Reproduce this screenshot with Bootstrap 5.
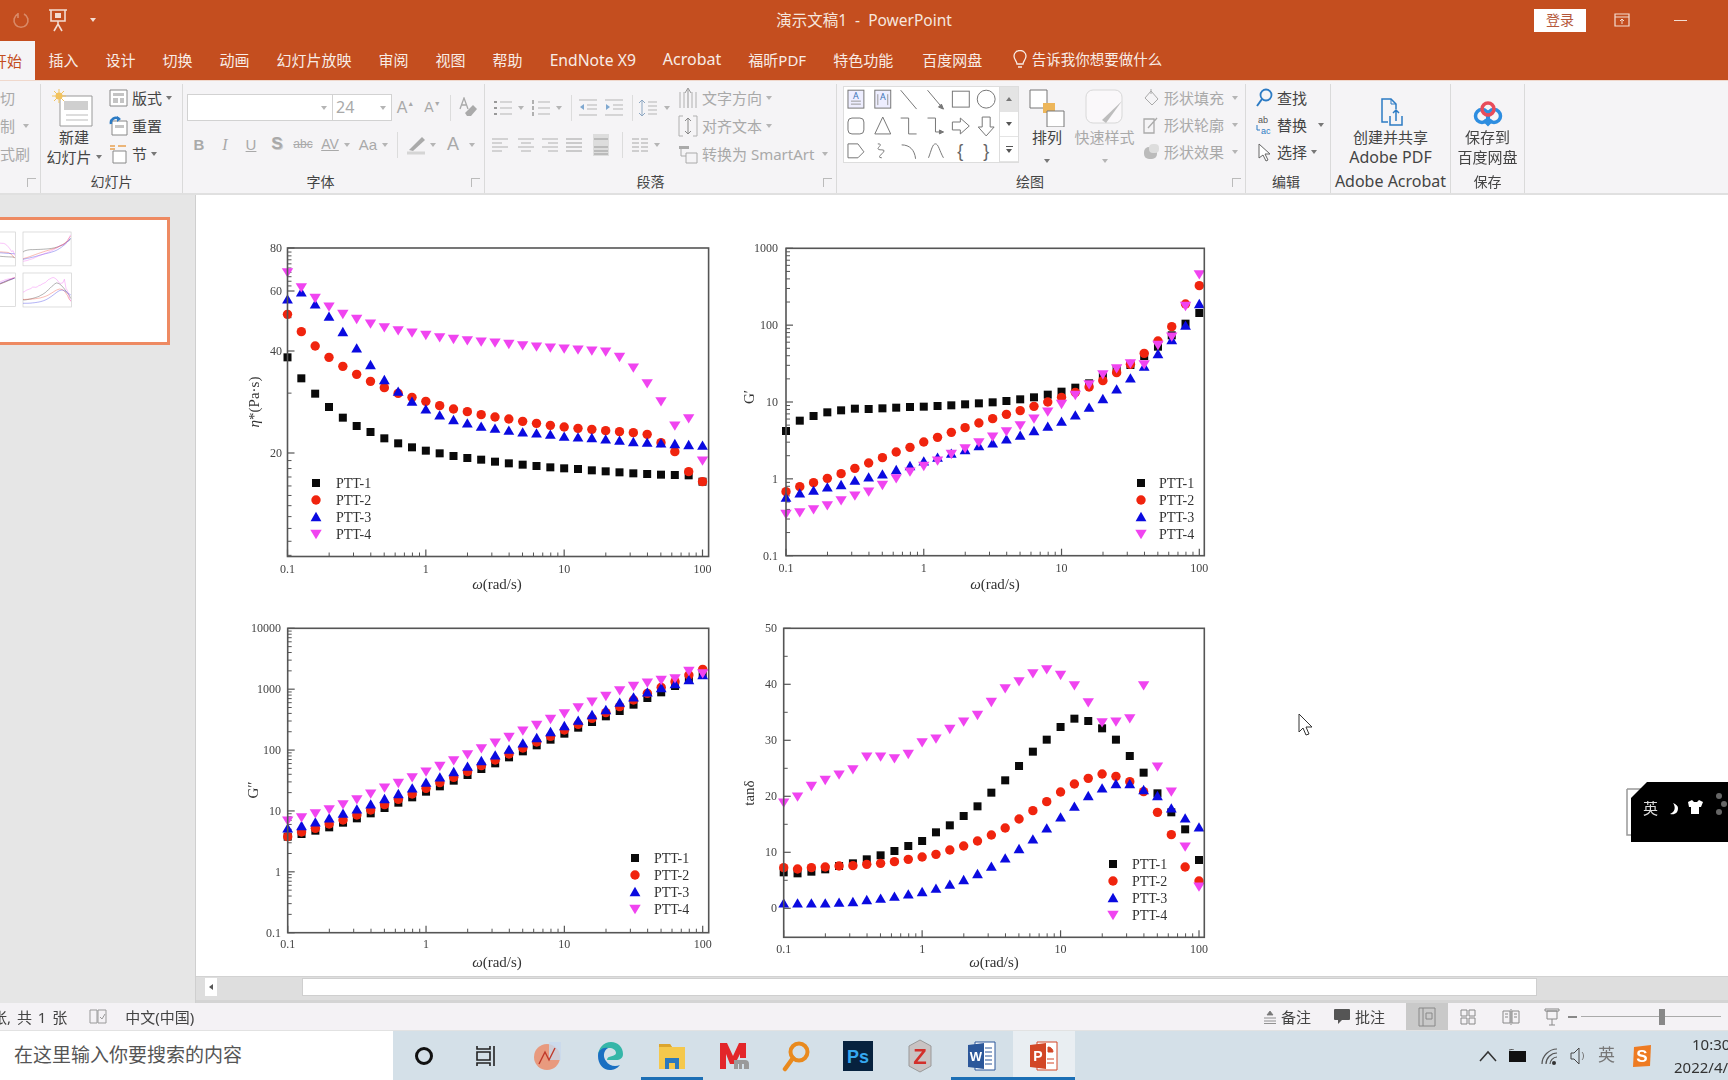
<!DOCTYPE html>
<html lang="zh-CN">
<head>
<meta charset="UTF-8" />
<title>演示文稿1 - PowerPoint</title>
<link href="https://cdn.jsdelivr.net/npm/bootstrap@5.3.0/dist/css/bootstrap.min.css" rel="stylesheet" />
<style>
  html, body { margin: 0; width: 1728px; height: 1080px; overflow: hidden; background: #fff; }
  body { font-family: "Noto Sans", "Noto Sans CJK SC", sans-serif; color: #444; font-size: 15px; line-height: 1.2; }
  .pp-app { width: 1728px; height: 1080px; position: relative; overflow: hidden; filter: blur(.5px); }
  .pp-title { height: 40px; background: #C44E1F; color: #F6E6DE; display: grid; grid-template-columns: 1fr auto 1fr; align-items: center; font-size: 15.5px; }
  .pp-tabs { height: 40px; background: #C44E1F; color: #F8ECE6; white-space: nowrap; }
  .pp-tab { padding: 0 13.5px; }
  .pp-tab-on { width: 35px; height: 39px; margin-top: 1px; background: #F5F4F6; color: #C44E1F; overflow: hidden; justify-content: flex-end; padding-right: 13px; flex-shrink: 0; }
  .pp-login { width: 52px; height: 23px; background: #fff; color: #B5573A; font-size: 14px; }
  .pp-ribbon { height: 115px; background: #F5F4F6; border-top: 1px solid #F0D8CC; border-bottom: 2px solid #E0E0E0; }
  .pp-grp { height: 109px; margin-top: 3px; border-right: 1px solid #DADADA; flex-shrink: 0; }
  .pp-grp-body { height: 88px; }
  .pp-grp-label { display: grid; grid-template-columns: 1fr auto 1fr; height: 20px; align-items: center; font-size: 14px; color: #444; padding-right: 4px; }
  .pp-launch { justify-self: end; width: 9px; height: 9px; border-left: 1px solid #bbb; border-top: 1px solid #bbb; }
  .pp-row { height: 28px; display: flex; align-items: center; white-space: nowrap; }
  .pp-off { color: #A9A9A9; }
  .pp-cell { display: inline-flex; align-items: center; justify-content: center; height: 27px; flex-shrink: 0; }
  .pp-tri { display: inline-block; width: 0; height: 0; border-left: 3px solid transparent; border-right: 3px solid transparent; border-top: 4px solid #777; flex-shrink: 0; }
  .pp-off .pp-tri, .pp-tri.pp-off { border-top-color: #B5B5B5; }
  .pp-sep { width: 1px; height: 26px; background: #DCDCDC; flex-shrink: 0; }
  .pp-box { height: 27px; background: #fff; border: 1px solid #D2D2D2; display: flex; align-items: center; flex-shrink: 0; }
  .pp-serif { font-family: "Liberation Sans", sans-serif; }
  .pp-bigcol { display: flex; flex-direction: column; align-items: center; flex-shrink: 0; }
  .pp-bigicon { height: 43px; display: flex; align-items: flex-end; justify-content: center; }
  .pp-line { height: 20px; line-height: 20px; white-space: nowrap; }
  .pp-gallery { width: 176px; height: 77px; margin-top: 2px; background: #fff; border: 1px solid #DDD; display: flex; flex-shrink: 0; }
  .pp-gal-side { width: 19px; border-left: 1px solid #DDD; display: flex; flex-direction: column; }
  .pp-gal-side > div { flex: 1; display: flex; align-items: center; justify-content: center; border-bottom: 1px solid #E4E4E4; }
  .pp-main { height: 808px; }
  .pp-left { width: 196px; background: #E6E6E6; border-right: 1px solid #CFCFCF; padding-top: 22px; flex-shrink: 0; }
  .pp-thumb { width: 173px; height: 128px; margin-left: -3px; border: 3px solid #EE8A62; background: #fff; }
  .pp-thumb svg, .pp-slide svg { display: block; }
  .pp-slide { height: 781px; background: #fff; }
  .pp-scroll { height: 27px; background: #DEDEDE; border-top: 1px solid #D2D2D2; padding: 1px 0 0 9px; border-bottom: 3px solid #D4D4D4; }
  .pp-scroll-btn { width: 12px; height: 18px; background: #fff; display: flex; align-items: center; justify-content: center; }
  .pp-scroll-thumb { width: 1235px; height: 18px; margin-left: 85px; background: #fff; border: 1px solid #CFCFCF; }
  .pp-status { height: 28px; background: #F4F2F5; font-size: 15px; white-space: nowrap; border-bottom: 1px solid #E2E2E2; overflow: hidden; }
  .pp-view-on { width: 42px; height: 28px; background: #C9C9C9; display: flex; align-items: center; justify-content: center; margin-left: 21px; }
  .pp-task { height: 49px; background: #D4E0E8; }
  .pp-search { width: 393px; height: 49px; background: #fff; color: #555; font-size: 19px; padding-left: 14px; flex-shrink: 0; }
  .pp-tcell { width: 62px; height: 49px; display: flex; align-items: center; justify-content: center; flex-shrink: 0; }
  .pp-tcell-open { box-shadow: inset 0 -3px 0 #1C6FB5; }
  .pp-tcell-act { background: #E9EEF2; box-shadow: inset 0 -3px 0 #1C6FB5; }
  .pp-clock { width: 54px; margin-left: 21px; font-size: 15px; color: #333; line-height: 23px; white-space: nowrap; overflow: hidden; }
  .pp-clock-time { padding-left: 18px; }
  .pp-float { position: absolute; left: 1626px; top: 782px; width: 102px; height: 60px; }
  .pp-float-txt { position: absolute; left: 17px; top: 17px; color: #ddd; font-size: 15px; }
  .pp-cursor { position: absolute; left: 1298px; top: 713px; }
</style>
</head>
<body>
<div class="pp-app">

  <!-- title bar -->
  <div class="pp-title">
    <div class="d-flex align-items-center">
      <svg width="20" height="20" style="margin-left:11px" viewBox="0 0 20 20"><path d="M7 4a7 7 0 1 0 6 0M7 3v5" fill="none" stroke="#D98A68" stroke-width="1.6"/></svg>
      <svg width="22" height="26" style="margin-left:16px" viewBox="0 0 22 26"><path d="M2 3h18M4 3v11h14V3M11 14v3M7 24l4-7 4 7" fill="none" stroke="#F3DDD2" stroke-width="1.6"/><path d="M8 6h6v5H8z" fill="#F3DDD2"/></svg>
      <span class="pp-tri" style="margin-left:21px;border-top-color:#F3DDD2"></span>
    </div>
    <div>演示文稿1&nbsp; -&nbsp; PowerPoint</div>
    <div class="d-flex align-items-center justify-content-end">
      <div class="pp-login d-flex align-items-center justify-content-center">登录</div>
      <svg width="16" height="14" style="margin-left:28px" viewBox="0 0 16 14"><path d="M1 1h14v12H1zM1 4h14" fill="none" stroke="#F3DDD2" stroke-width="1.2"/><path d="M8 11V6M6 8l2-2 2 2" fill="none" stroke="#F3DDD2"/></svg>
      <div style="width:13px;height:1px;background:#F3DDD2;margin:0 41px 0 44px"></div>
    </div>
  </div>

  <!-- tabs -->
  <div class="pp-tabs d-flex align-items-center">
    <div class="pp-tab-on d-flex align-items-center"><span>开始</span></div>
    <span class="pp-tab">插入</span>
    <span class="pp-tab">设计</span>
    <span class="pp-tab">切换</span>
    <span class="pp-tab">动画</span>
    <span class="pp-tab">幻灯片放映</span>
    <span class="pp-tab">审阅</span>
    <span class="pp-tab">视图</span>
    <span class="pp-tab">帮助</span>
    <span class="pp-tab" style="font-size:15.700px">EndNote X9</span>
    <span class="pp-tab" style="font-size:16px">Acrobat</span>
    <span class="pp-tab">福昕PDF</span>
    <span class="pp-tab">特色功能</span>
    <span class="pp-tab" style="margin-left:2px">百度网盘</span>
    <svg width="16" height="20" class="ms-3" viewBox="0 0 16 20"><path d="M5 14c0-3-3-4-3-8a6 5.500 0 0 1 12 0c0 4-3 5-3 8zM6 17h4" fill="none" stroke="#F8ECE6" stroke-width="1.3"/></svg>
    <span class="ms-1" style="font-size:14.500px">告诉我你想要做什么</span>
  </div>

  <!-- ribbon -->
  <div class="pp-ribbon d-flex">

    <div class="pp-grp" style="width:41px">
      <div class="pp-grp-body pp-off" style="overflow:hidden">
        <div class="pp-row">切</div>
        <div class="pp-row">制<span class="pp-tri ms-2"></span></div>
        <div class="pp-row">式刷</div>
      </div>
      <div class="pp-grp-label"><span></span><span></span><span class="pp-launch"></span></div>
    </div>

    <div class="pp-grp d-flex flex-column" style="width:142px">
      <div class="pp-grp-body d-flex">
        <div class="pp-bigcol" style="width:66px">
          <div class="pp-bigicon">
            <svg width="44" height="38" viewBox="0 0 44 38"><path d="M8 7h32v30H8z" fill="#fff" stroke="#999"/><path d="M12 12h24v9H12z" fill="#CFCFCF"/><path d="M14 26h22M14 31h22" stroke="#BBB"/><circle cx="7" cy="7" r="3.500" fill="#F2C35E"/><path d="M7 0v14M0 7h14M2 2l10 10M12 2L2 12" stroke="#F2C35E"/></svg>
          </div>
          <div class="pp-line">新建</div>
          <div class="pp-line">幻灯片<span class="pp-tri ms-1 mb-1"></span></div>
        </div>
        <div style="width:74px;padding-left:2px">
          <div class="pp-row"><svg width="19" height="18" viewBox="0 0 19 18" class="me-1"><path d="M1 1h17v16H1z" fill="#fff" stroke="#888"/><path d="M4 4h11v3H4zM4 9h5v5H4zM11 9h4v5h-4z" fill="#C4C4C4"/></svg>版式<span class="pp-tri ms-1"></span></div>
          <div class="pp-row"><svg width="19" height="20" viewBox="0 0 19 20" class="me-1"><path d="M3 5h15v14H3z" fill="#fff" stroke="#888"/><path d="M6 9h9v3H6z" fill="#C4C4C4"/><path d="M2 8a5 5 0 0 1 8-5" fill="none" stroke="#2C7BC4" stroke-width="2.500"/><path d="M8 0l4 3-4 3z" fill="#2C7BC4"/></svg>重置</div>
          <div class="pp-row"><svg width="19" height="20" viewBox="0 0 19 20" class="me-1"><path d="M4 7h13v12H4z" fill="#fff" stroke="#888"/><path d="M1 2h5M9 2h8M1 5h5" stroke="#E8A050" stroke-width="1.600"/></svg>节<span class="pp-tri ms-1"></span></div>
        </div>
      </div>
      <div class="pp-grp-label"><span></span><span style="margin-left:4px">幻灯片</span><span></span></div>
    </div>

    <div class="pp-grp d-flex flex-column pp-off" style="width:302px">
      <div class="pp-grp-body">
        <div class="d-flex align-items-center" style="margin-top:10px;padding-left:4px;height:27px">
          <div class="pp-box justify-content-end" style="width:146px;padding-right:5px"><span class="pp-tri"></span></div>
          <div class="pp-box justify-content-between" style="width:59px;padding:0 5px 0 3px;border-left:0"><span style="font-size:16px">24</span><span class="pp-tri"></span></div>
          <span class="pp-cell pp-serif" style="width:27px;font-size:16px">A<sup style="font-size:7px">▲</sup></span>
          <span class="pp-cell pp-serif" style="width:27px;font-size:14px">A<sup style="font-size:7px">▼</sup></span>
          <span class="pp-sep ms-1"></span>
          <span class="pp-cell" style="width:34px"><svg width="20" height="22" viewBox="0 0 20 22"><path d="M2 12L6 1l4 11M4 8h4" fill="none" stroke="#A9A9A9" stroke-width="1.300"/><path d="M7 16l8-8 4 4-6 7H9z" fill="#AAA"/></svg></span>
        </div>
        <div class="d-flex align-items-center" style="margin-top:10px;height:27px;margin-left:3px">
          <span class="pp-cell pp-serif fw-bold" style="width:26px">B</span>
          <span class="pp-cell pp-serif fst-italic" style="width:26px;font-family:'Liberation Serif',serif;font-size:16px">I</span>
          <span class="pp-cell pp-serif text-decoration-underline" style="width:26px">U</span>
          <span class="pp-cell pp-serif fw-bold" style="width:26px;font-size:17px;text-shadow:1px 1px 0 #ccc">S</span>
          <span class="pp-cell pp-serif text-decoration-line-through" style="width:26px;font-size:12px">abc</span>
          <span class="pp-cell pp-serif" style="width:26px;font-size:14px;margin-left:1px;text-decoration:underline">AV</span>
          <span class="pp-cell" style="width:8px"><span class="pp-tri"></span></span>
          <span class="pp-cell pp-serif" style="width:26px;margin-left:4px">Aa</span>
          <span class="pp-cell" style="width:8px"><span class="pp-tri"></span></span>
          <span class="pp-sep" style="margin-left:8px"></span>
          <span class="pp-cell" style="width:24px;margin-left:6px"><svg width="22" height="22" viewBox="0 0 22 22"><path d="M4 16L17 3l3 3L8 17z" fill="#AAA"/><path d="M2 19h18" stroke="#D5D5D5" stroke-width="3"/></svg></span>
          <span class="pp-cell" style="width:8px;margin-left:1px"><span class="pp-tri"></span></span>
          <span class="pp-cell pp-serif" style="width:24px;margin-left:4px;font-size:18px">A</span>
          <span class="pp-cell" style="width:8px;margin-left:3px"><span class="pp-tri"></span></span>
        </div>
      </div>
      <div class="pp-grp-label" style="color:#444"><span></span><span style="margin-right:22px">字体</span><span class="pp-launch"></span></div>
    </div>

    <div class="pp-grp d-flex flex-column pp-off" style="width:352px">
      <div class="pp-grp-body d-flex">
        <div style="width:193px">
          <div class="d-flex align-items-center" style="margin-top:10px;height:27px;padding-left:6px">
            <span class="pp-cell" style="width:24px"><svg width="20" height="18" viewBox="0 0 20 18"><path d="M1 3h3M1 9h3M1 15h3" stroke="#999" stroke-width="2"/><path d="M7 3h12M7 9h12M7 15h12" stroke="#B5B5B5"/></svg></span>
            <span class="pp-cell" style="width:8px;margin-left:2px"><span class="pp-tri"></span></span>
            <span class="pp-cell" style="width:24px;margin-left:4px"><svg width="20" height="18" viewBox="0 0 20 18"><path d="M2 1v4M2 7v4M2 13v4" stroke="#999" stroke-width="1.500"/><path d="M7 3h12M7 9h12M7 15h12" stroke="#B5B5B5"/></svg></span>
            <span class="pp-cell" style="width:8px;margin-left:2px"><span class="pp-tri"></span></span>
            <span class="pp-sep" style="margin-left:8px"></span>
            <span class="pp-cell" style="width:24px;margin-left:4px"><svg width="20" height="18" viewBox="0 0 20 18"><path d="M1 1h18M9 6h10M9 10h10M1 16h18" stroke="#B5B5B5"/><path d="M6 5L2 8l4 3z" fill="#7FA8D0"/></svg></span>
            <span class="pp-cell" style="width:24px;margin-left:2px"><svg width="20" height="18" viewBox="0 0 20 18"><path d="M1 1h18M9 6h10M9 10h10M1 16h18" stroke="#B5B5B5"/><path d="M2 5l4 3-4 3z" fill="#7FA8D0"/></svg></span>
            <span class="pp-sep" style="margin-left:6px"></span>
            <span class="pp-cell" style="width:24px;margin-left:3px"><svg width="20" height="20" viewBox="0 0 20 20"><path d="M4 2v16M1 5l3-3 3 3M1 15l3 3 3-3" fill="none" stroke="#8DA7C2"/><path d="M10 4h9M10 8h9M10 12h9M10 16h9" stroke="#B5B5B5"/></svg></span>
            <span class="pp-cell" style="width:8px;margin-left:3px"><span class="pp-tri"></span></span>
          </div>
          <div class="d-flex align-items-center" style="margin-top:10px;height:27px;padding-left:3px">
            <span class="pp-cell" style="width:24px"><svg width="18" height="14" viewBox="0 0 18 14"><path d="M1 1h16M1 5h10M1 9h16M1 13h10" stroke="#B0B0B0"/></svg></span>
            <span class="pp-cell" style="width:24px;margin-left:2px"><svg width="18" height="14" viewBox="0 0 18 14"><path d="M1 1h16M4 5h10M1 9h16M4 13h10" stroke="#B0B0B0"/></svg></span>
            <span class="pp-cell" style="width:24px"><svg width="18" height="14" viewBox="0 0 18 14"><path d="M1 1h16M7 5h10M1 9h16M7 13h10" stroke="#B0B0B0"/></svg></span>
            <span class="pp-cell" style="width:24px"><svg width="18" height="14" viewBox="0 0 18 14"><path d="M1 1h16M1 5h16M1 9h16M1 13h16" stroke="#A0A0A0"/></svg></span>
            <span class="pp-cell" style="width:24px;margin-left:3px"><svg width="18" height="24" viewBox="0 0 18 24"><path d="M1 1h16v22H1z" fill="#DDD"/><path d="M2 6h14M2 14h14M2 18h14M2 21h14" stroke="#999"/></svg></span>
            <span class="pp-sep" style="margin-left:9px"></span>
            <span class="pp-cell" style="width:24px;margin-left:5px"><svg width="18" height="14" viewBox="0 0 18 14"><path d="M1 1h7M10 1h7M1 5h7M10 5h7M1 9h7M10 9h7M1 13h7M10 13h7" stroke="#A8A8A8"/></svg></span>
            <span class="pp-cell" style="width:8px;margin-left:1px"><span class="pp-tri"></span></span>
          </div>
        </div>
        <div>
          <div class="pp-row" style="height:28px"><svg width="20" height="24" viewBox="0 0 20 24" class="me-1"><path d="M2 6v16M6 6v16M14 6v16M18 6v16" stroke="#B0B0B0"/><path d="M10 22V3M7 7l3-5 3 5" fill="none" stroke="#999"/></svg>文字方向<span class="pp-tri ms-1"></span></div>
          <div class="pp-row" style="height:28px"><svg width="20" height="22" viewBox="0 0 20 22" class="me-1"><path d="M5 1H1v20h4M15 1h4v20h-4" fill="none" stroke="#B0B0B0"/><path d="M10 3v16M7 6l3-3 3 3M7 16l3 3 3-3" fill="none" stroke="#888"/></svg>对齐文本<span class="pp-tri ms-1"></span></div>
          <div class="pp-row" style="height:28px"><svg width="20" height="20" viewBox="0 0 20 20" class="me-1"><path d="M1 2h10v3H1z" fill="#AAA"/><path d="M8 9h11v10H8z" fill="none" stroke="#AAA"/><path d="M3 5v7h5" fill="none" stroke="#AAA"/></svg>转换为 SmartArt<span class="pp-tri ms-2"></span></div>
        </div>
      </div>
      <div class="pp-grp-label" style="color:#444"><span></span><span style="margin-right:16px">段落</span><span class="pp-launch"></span></div>
    </div>

    <div class="pp-grp d-flex flex-column" style="width:409px">
      <div class="pp-grp-body d-flex" style="padding-left:6px">
        <div class="pp-gallery">
          <svg width="156" height="75" viewBox="844 87 156 75" fill="none" stroke="#777">
            <rect x="848" y="90" width="16" height="18" fill="#EEF"/><path d="M851 101h10M851 104h10" stroke="#999"/><text x="856" y="99" font-size="9" fill="#3A74B8" stroke="none" text-anchor="middle">A</text>
            <rect x="875" y="90" width="16" height="18" fill="#EEF"/><path d="M878 94v11M888 94v11" stroke="#999"/><text x="883" y="100" font-size="9" fill="#3A74B8" stroke="none" text-anchor="middle">A</text>
            <path d="M901 90l16 19M928 90l16 19"/><path d="M944 109l-5-2 3-3z" fill="#777"/>
            <rect x="953" y="91" width="17" height="16"/><ellipse cx="987" cy="99" rx="9" ry="9"/>
            <rect x="848" y="118" width="16" height="16" rx="4"/><path d="M883 117l8 17h-16z"/>
            <path d="M901 118h8v16h8M928 118h8v14h8"/><path d="M944 132l-4-2v4z" fill="#777"/>
            <path d="M953 122h8v-4l9 8-9 8v-4h-8zM983 117h8v10h4l-8 9-8-9h4z"/>
            <path d="M848 158v-14h10l6 8-6 6zM878 144c8 0-6 6 4 6 8 0-8 8 0 8M902 145c8 0 13 5 14 14M929 158c3-8 4-14 7-14s4 7 8 14"/>
            <text x="961" y="157" font-size="18" fill="#666" stroke="none" text-anchor="middle" font-family="Liberation Sans">{</text>
            <text x="987" y="157" font-size="18" fill="#666" stroke="none" text-anchor="middle" font-family="Liberation Sans">}</text>
          </svg>
          <div class="pp-gal-side">
            <div style="background:#E4E4E4"><span class="pp-tri" style="transform:rotate(180deg)"></span></div>
            <div><span class="pp-tri" style="border-top-color:#555"></span></div>
            <div class="flex-column"><span style="width:7px;height:1px;background:#555;margin-bottom:2px"></span><span class="pp-tri" style="border-top-color:#555"></span></div>
          </div>
        </div>
        <div class="pp-bigcol" style="width:48px;margin-left:4px">
          <div class="pp-bigicon">
            <svg width="36" height="38" viewBox="0 0 36 38"><path d="M1 1h17v18H1z" fill="#fff" stroke="#777"/><path d="M14 14h12v10H14z" fill="#EDB65A"/><path d="M18 22h17v16H18z" fill="#fff" stroke="#777"/></svg>
          </div>
          <div class="pp-line">排列</div>
          <div class="pp-line"><span class="pp-tri"></span></div>
        </div>
        <div class="pp-bigcol pp-off" style="width:59px;margin-left:4px">
          <div class="pp-bigicon">
            <svg width="42" height="38" viewBox="0 0 42 38"><rect x="2" y="1" width="36" height="33" rx="7" fill="#FAF8FA" stroke="#D8D8D8"/><path d="M38 12L22 34l-4-3z" fill="#BDBDBD"/></svg>
          </div>
          <div class="pp-line">快速样式</div>
          <div class="pp-line"><span class="pp-tri"></span></div>
        </div>
        <div class="pp-off" style="margin-left:9px">
          <div class="pp-row"><svg width="17" height="20" viewBox="0 0 17 20" class="me-1"><path d="M8 3l7 8-6 6-7-7zM8 1v5" fill="none" stroke="#AAA"/></svg>形状填充<span class="pp-tri ms-2"></span></div>
          <div class="pp-row" style="height:26px"><svg width="17" height="18" viewBox="0 0 17 18" class="me-1"><path d="M1 3h10v14H1zM5 12l9-10" fill="none" stroke="#AAA" stroke-width="1.300"/></svg>形状轮廓<span class="pp-tri ms-2"></span></div>
          <div class="pp-row"><svg width="17" height="18" viewBox="0 0 17 18" class="me-1"><rect x="1" y="4" width="13" height="12" rx="5" fill="#BBB"/><rect x="6" y="1" width="10" height="9" rx="4" fill="#DDD"/></svg>形状效果<span class="pp-tri ms-2"></span></div>
        </div>
      </div>
      <div class="pp-grp-label"><span></span><span style="margin-right:18px">绘图</span><span class="pp-launch"></span></div>
    </div>

    <div class="pp-grp d-flex flex-column" style="width:85px">
      <div class="pp-grp-body" style="padding-left:9px">
        <div class="pp-row" style="height:27px"><svg width="18" height="20" viewBox="0 0 18 20" class="me-1"><circle cx="11" cy="7" r="5.500" fill="none" stroke="#2C7BC4" stroke-width="1.800"/><path d="M7 11l-5 7" stroke="#2C7BC4" stroke-width="2"/></svg>查找</div>
        <div class="pp-row" style="height:27px"><svg width="18" height="22" viewBox="0 0 18 22" class="me-1"><text x="3" y="9" font-size="9" fill="#555" font-family="Liberation Sans">ab</text><text x="6" y="20" font-size="9" fill="#2C7BC4" font-family="Liberation Sans">ac</text><path d="M2 11v5h3" fill="none" stroke="#2C7BC4"/></svg>替换<span class="pp-tri" style="margin-left:11px"></span></div>
        <div class="pp-row"><svg width="18" height="20" viewBox="0 0 18 20" class="me-1"><path d="M4 2v14l4-3 3 6 2-1-3-6h5z" fill="#fff" stroke="#666"/></svg>选择<span class="pp-tri ms-1"></span></div>
      </div>
      <div class="pp-grp-label"><span></span><span>编辑</span><span></span></div>
    </div>

    <div class="pp-grp d-flex flex-column" style="width:120px">
      <div class="pp-grp-body">
        <div class="pp-bigcol">
          <div class="pp-bigicon">
            <svg width="24" height="30" viewBox="0 0 24 30"><path d="M9 25H3V2h9l5 5v5" fill="none" stroke="#2C7BC4" stroke-width="1.500"/><path d="M12 2v5h5" fill="none" stroke="#2C7BC4"/><path d="M11 19v9h12v-9M17 24V13M14 16l3-3 3 3" fill="none" stroke="#2C7BC4" stroke-width="1.500"/></svg>
          </div>
          <div class="pp-line">创建并共享</div>
          <div class="pp-line" style="font-size:16px">Adobe PDF</div>
        </div>
      </div>
      <div class="pp-grp-label" style="padding:0"><span></span><span style="font-size:16px;white-space:nowrap">Adobe Acrobat</span><span></span></div>
    </div>

    <div class="pp-grp d-flex flex-column" style="width:74px">
      <div class="pp-grp-body">
        <div class="pp-bigcol">
          <div class="pp-bigicon">
            <svg width="30" height="26" viewBox="0 0 30 26" fill="none" stroke-width="3.500"><circle cx="9" cy="15" r="6.500" stroke="#2D8DE0"/><circle cx="21" cy="15" r="6.500" stroke="#2D8DE0"/><circle cx="15" cy="8" r="6" stroke="#E84B5A"/><path d="M11 19l4 4 4-4" stroke="#2D8DE0"/></svg>
          </div>
          <div class="pp-line">保存到</div>
          <div class="pp-line">百度网盘</div>
        </div>
      </div>
      <div class="pp-grp-label" style="padding:0"><span></span><span>保存</span><span></span></div>
    </div>
  </div>

  <!-- thumbnail pane and slide -->
  <div class="pp-main d-flex">
    <div class="pp-left">
      <div class="pp-thumb"><svg id="thumb-svg" width="167" height="122" viewBox="0 220 167 122"></svg></div>
    </div>
    <div class="flex-grow-1">
      <div class="pp-slide"><svg id="slide-svg" width="1532" height="781" viewBox="196 195 1532 781"></svg></div>
      <div class="pp-scroll d-flex">
        <div class="pp-scroll-btn"><span class="pp-tri" style="transform:rotate(90deg);border-top-color:#555"></span></div>
        <div class="pp-scroll-thumb"></div>
      </div>
    </div>
  </div>

  <!-- status bar -->
  <div class="pp-status d-flex align-items-center">
    <span style="margin-left:-8px;word-spacing:2px">张, 共 1 张</span>
    <svg width="18" height="15" viewBox="0 0 18 15" style="margin-left:22px"><path d="M1 1h7v13H1zM9 1h8v13H9zM11 8l2 2 3-5" fill="none" stroke="#999"/></svg>
    <span style="margin-left:18px">中文(中国)</span>
    <div class="d-flex align-items-center ms-auto" style="margin-right:-12px">
      <svg width="14" height="14" viewBox="0 0 14 14"><path d="M7 1l3 4H4zM1 8h12M1 11h12M1 13.500h12" stroke="#777" fill="#777" stroke-width=".8"/></svg>
      <span class="ms-1">备注</span>
      <svg width="18" height="17" viewBox="0 0 18 17" style="margin-left:22px"><path d="M2 1h14a1 1 0 0 1 1 1v9a1 1 0 0 1-1 1H9l-4 4v-4H2a1 1 0 0 1-1-1V2a1 1 0 0 1 1-1z" fill="#555"/></svg>
      <span class="ms-1">批注</span>
      <div class="pp-view-on"><svg width="18" height="20" viewBox="0 0 18 20"><path d="M1 1h16v18H1zM5 1v18M8 6h6v6H8z" fill="none" stroke="#888"/></svg></div>
      <svg width="16" height="16" viewBox="0 0 16 16" style="margin-left:12px"><path d="M1 1h6v6H1zM9 1h6v6H9zM1 9h6v6H1zM9 9h6v6H9z" fill="none" stroke="#888"/></svg>
      <svg width="18" height="16" viewBox="0 0 18 16" style="margin-left:26px"><path d="M1 2h7v12H1zM10 2h7v12h-7zM9 0v16M3 5h3M3 8h3M12 5h3M12 8h3" fill="none" stroke="#888"/></svg>
      <svg width="16" height="18" viewBox="0 0 16 18" style="margin-left:24px"><path d="M1 1h14v2H1zM3 3h10v8H3zM8 11v6M5 17h6" fill="none" stroke="#888"/></svg>
      <div class="d-flex align-items-center" style="margin-left:8px;width:172px">
        <span style="width:9px;height:2px;background:#888"></span>
        <span style="width:78px;height:1px;background:#AAA;margin-left:4px"></span>
        <span style="width:6px;height:16px;background:#888"></span>
        <span style="width:56px;height:1px;background:#AAA"></span>
        <span style="width:7px;height:2px;background:#888;margin-left:8px"></span>
      </div>
    </div>
  </div>

  <!-- taskbar -->
  <div class="pp-task d-flex align-items-center">
    <div class="pp-search d-flex align-items-center">在这里输入你要搜索的内容</div>
    <div class="pp-tcell"><svg width="22" height="22" viewBox="0 0 22 22"><circle cx="11" cy="11" r="7.500" fill="none" stroke="#111" stroke-width="3"/></svg></div>
    <div class="pp-tcell"><svg width="24" height="22" viewBox="0 0 24 22"><path d="M3 1v3h13V1M3 21v-3h13v3M3 7h13v8H3zM20 1v20" fill="none" stroke="#222" stroke-width="1.600"/></svg></div>
    <div class="pp-tcell"><svg width="30" height="32" viewBox="0 0 30 32"><circle cx="14" cy="17" r="13" fill="#E89A7E"/><path d="M16 2h12v18H16z" fill="#C8D8EC" opacity=".8"/><path d="M6 24l6-12 4 8 6-12" fill="none" stroke="#C0392B" stroke-width="1.400"/></svg></div>
    <div class="pp-tcell"><svg width="30" height="32" viewBox="0 0 30 32"><path d="M3 16C3 8 9 2 16 2c7 0 12 5 12 12 0 4-3 6-7 6H12c0-5 9-3 9-7 0-3-3-5-7-5-6 0-11 5-11 8z" fill="#35B6A8"/><path d="M3 16c0-6 5-9 10-8-5 3-5 9-2 13 3 5 9 6 14 4-3 4-7 5-10 5C8 30 3 24 3 16z" fill="#1A6FC2"/></svg></div>
    <div class="pp-tcell pp-tcell-open"><svg width="28" height="30" viewBox="0 0 28 30"><path d="M1 3h11l2 3h13v22H1z" fill="#F5C84C"/><path d="M1 3h11l2 3H1z" fill="#DCA52E"/><path d="M7 17h14v11h-4v-6h-6v6H7z" fill="#2C79BE"/></svg></div>
    <div class="pp-tcell"><svg width="32" height="32" viewBox="0 0 32 32"><path d="M2 29V3h7l6 13 6-13h7v15h-6v-4l-5 10h-5l-4-10v15z" fill="#E3262A"/><path d="M16 29V20h11a4 4 0 0 1 4 4v5h-5v-5h-2v5h-3v-5h-1v5z" fill="#9A9A9A"/></svg></div>
    <div class="pp-tcell"><svg width="30" height="32" viewBox="0 0 30 32"><circle cx="18" cy="12" r="8.500" fill="none" stroke="#E98A1E" stroke-width="4"/><path d="M12 18L4 29" stroke="#E98A1E" stroke-width="4.500" stroke-linecap="round"/></svg></div>
    <div class="pp-tcell"><svg width="30" height="30" viewBox="0 0 30 30"><rect width="30" height="30" fill="#07223E"/><text x="15" y="22" text-anchor="middle" font-size="18" font-weight="700" fill="#35A8F0" font-family="Liberation Sans">Ps</text></svg></div>
    <div class="pp-tcell"><svg width="28" height="34" viewBox="0 0 28 34"><path d="M14 1l11 6v20l-11 6-11-6V7z" fill="#C9C3C3" stroke="#999"/><text x="14" y="25" text-anchor="middle" font-size="22" font-weight="700" fill="#D32F2A" font-family="Liberation Sans">Z</text></svg></div>
    <div class="pp-tcell pp-tcell-open"><svg width="30" height="30" viewBox="0 0 30 30"><path d="M8 1h20v28H8z" fill="#fff" stroke="#2B579A"/><path d="M18 7h7M18 11h7M18 15h7M18 19h7M18 23h7" stroke="#2B579A"/><path d="M1 4l16-2v26L1 26z" fill="#2B579A"/><text x="9" y="20" text-anchor="middle" font-size="13" font-weight="700" fill="#fff" font-family="Liberation Sans">W</text></svg></div>
    <div class="pp-tcell pp-tcell-act"><svg width="30" height="30" viewBox="0 0 30 30"><path d="M8 1h20v28H8z" fill="#fff" stroke="#D24726"/><path d="M19 6a5 5 0 0 1 5 5h-5zM18 18h7M18 22h7" stroke="#D24726" fill="#D24726"/><path d="M1 4l16-2v26L1 26z" fill="#D24726"/><text x="9" y="20" text-anchor="middle" font-size="14" font-weight="700" fill="#fff" font-family="Liberation Sans">P</text></svg></div>
    <div class="d-flex align-items-center ms-auto">
      <svg width="18" height="12" viewBox="0 0 18 12"><path d="M1 11l8-9 8 9" fill="none" stroke="#333" stroke-width="1.500"/></svg>
      <svg width="20" height="14" viewBox="0 0 20 14" style="margin-left:11px"><rect x="1" y="2" width="17" height="11" fill="#111"/><path d="M1 1l5-1" stroke="#555"/></svg>
      <svg width="20" height="20" viewBox="0 0 20 20" style="margin-left:12px"><path d="M2 18C2 10 9 3 17 3M6 18c0-6 5-11 11-11M10 18c0-3 3-7 7-7" fill="none" stroke="#555" stroke-width="1.200"/><circle cx="14" cy="17" r="2" fill="#333"/></svg>
      <svg width="18" height="20" viewBox="0 0 18 20" style="margin-left:10px"><path d="M1 7h3l5-5v16l-5-5H1z" fill="none" stroke="#444"/><path d="M12 6c2 2 2 6 0 8" fill="none" stroke="#777"/></svg>
      <span style="margin-left:10px;font-size:17px;color:#777">英</span>
      <svg width="22" height="24" viewBox="0 0 22 24" style="margin-left:16px"><path d="M3 3l17-2-1 21-17 1z" fill="#EE7B22"/><text x="11" y="18" text-anchor="middle" font-size="17" font-weight="700" fill="#fff" font-family="Liberation Sans">S</text></svg>
      <div class="pp-clock"><div class="pp-clock-time">10:30</div><div>2022/4/</div></div>
    </div>
  </div>

  <!-- floating input method toolbar -->
  <div class="pp-float">
    <svg width="102" height="60" viewBox="0 0 102 60"><path d="M1 7h70M1 7v46h10" fill="none" stroke="#999" stroke-width="1.500"/><path d="M5 16L21 0h81v60H5z" fill="#000"/><circle cx="93" cy="14" r="3" fill="#666"/><circle cx="98" cy="22" r="3" fill="#666"/><circle cx="93" cy="30" r="3" fill="#666"/><path d="M47 21c3 4 2 9-3 11 5 1 8-1 8-6 0-2-2-4-5-5zM62 20l4-2 2 2h3l2-2 4 2-2 5h-2v7h-8v-7h-2z" fill="#fff"/></svg>
    <span class="pp-float-txt">英</span>
  </div>

  <!-- mouse pointer -->
  <svg class="pp-cursor" width="15" height="23" viewBox="0 0 15 23"><path d="M1 1v18l4-4 3 7 3-1-3-7h6z" fill="#fff" stroke="#333"/></svg>
</div>

<script src="https://cdn.jsdelivr.net/npm/bootstrap@5.3.0/dist/js/bootstrap.bundle.min.js"></script>
<script>
  // data read off the reference plots: y positions in a 3x crop, one value per sample (10 per decade)
  const charts = [
    {
      left: 287.5, right: 708.6, top: 248, bottom: 556.5, x100: 702.5, originY: 200,
      yLabel: ['η', '*(Pa·s)'], yLabelX: 259, yLabelY: 402, tickRight: 282, xTickY: 573, xTitleX: 497, xTitleY: 589,
      legend: { marker: 316, text: 336, ys: [483, 500, 517, 534] },
      yTicks: [[80, 248], [60, 291], [40, 351], [20, 453]],
      yMinor: [10, 11, 12, 13, 14, 15, 16, 17, 18, 19, 30, 50, 62, 64, 66, 68, 70, 72, 74, 76, 78].map(v => 453 - 340 * Math.log10(v / 20)),
      series: [
        [472,535,581,621,653,678,696,715,730,742,752,760,768,774,779,785,790,794,798,802,805,807,811,814,817,820,822,824,825,826,845],
        [343,395,438,472,499,523,544,563,580,592,604,617,627,635,644,651,657,664,670,676,681,685,688,692,695,698,703,728,755,815,845],
        [298,277,313,350,396,445,495,540,575,605,628,646,660,670,680,686,692,697,700,704,710,712,714,718,722,726,728,730,732,735,737],
        [217,262,294,320,342,357,371,382,391,398,405,412,417,421,425,428,432,436,440,443,446,449,452,455,471,503,550,604,677,655,782]
      ]
    },
    {
      left: 786, right: 1204.3, top: 248.3, bottom: 555.7, x100: 1199.3, originY: 230,
      yLabel: ['', 'G′'], yLabelX: 754, yLabelY: 397, tickRight: 778, xTickY: 572, xTitleX: 995, xTitleY: 589,
      legend: { marker: 1141, text: 1159, ys: [483, 500, 517, 534] },
      decades: ['1000', '100', '10', '1', '0.1'],
      series: [
        [603,572,558,547,541,536,537,535,533,531,530,528,526,523,520,517,513,508,502,494,485,473,460,440,420,405,378,350,316,281,249],
        [785,770,758,745,731,715,699,683,666,652,636,622,607,593,579,566,553,542,529,516,502,487,471,452,428,403,370,333,290,222,167],
        [803,790,782,772,765,752,742,733,720,708,694,683,671,660,648,640,628,617,603,590,575,556,533,507,478,445,410,372,330,287,222],
        [852,847,838,826,811,797,785,765,745,725,708,692,672,655,637,620,604,586,566,545,522,495,463,433,415,400,403,345,320,228,133]
      ]
    },
    {
      left: 287.7, right: 708.7, top: 628.3, bottom: 932.7, x100: 702.7, originY: 610,
      yLabel: ['', 'G″'], yLabelX: 258, yLabelY: 790, tickRight: 281, xTickY: 948, xTitleX: 497, xTitleY: 967,
      legend: { marker: 635, text: 654, ys: [858, 875, 892, 909] },
      decades: ['10000', '1000', '100', '10', '1', '0.1'],
      series: [
        [680,672,662,652,638,625,610,594,578,562,545,529,512,495,477,460,442,424,406,389,371,353,336,319,303,284,264,247,228,210,190],
        [680,666,655,642,630,615,600,584,568,552,535,518,502,485,467,450,432,414,396,379,360,343,325,308,290,270,250,232,215,195,178],
        [655,648,637,625,611,598,583,567,552,535,518,502,486,470,453,436,419,400,384,366,348,332,315,300,278,262,247,234,222,210,195],
        [632,622,610,598,583,568,551,533,519,502,485,468,451,433,415,398,381,362,345,327,310,292,275,258,241,228,218,210,205,183,190]
      ]
    },
    {
      left: 783.7, right: 1204.3, top: 628.3, bottom: 937.3, x100: 1199, originY: 610,
      yLabel: ['', 'tanδ'], yLabelX: 754, yLabelY: 793, tickRight: 777, xTickY: 953, xTitleX: 994, xTitleY: 967,
      legend: { marker: 1113, text: 1132, ys: [864, 881, 898, 915] },
      yTicks: [[50, 628.3], [40, 684.3], [30, 740.3], [20, 796.3], [10, 852.3], [0, 908.3]],
      yMinor: [656.3, 712.3, 768.3, 824.3, 880.3],
      series: [
        [787,790,785,778,768,760,748,736,723,708,693,667,646,618,589,548,511,468,425,389,351,326,333,355,389,438,488,550,607,658,750],
        [773,777,773,771,768,767,763,760,755,748,741,733,720,708,693,675,654,627,602,575,546,522,505,492,499,515,545,607,674,771,813],
        [880,880,880,880,878,876,870,866,860,853,846,836,824,810,792,770,745,717,688,655,622,590,558,535,522,522,540,558,595,625,652],
        [578,560,528,510,494,478,440,440,445,432,397,386,357,335,315,276,235,214,190,178,195,226,277,337,335,325,226,470,545,710,830]
      ]
    }
  ];

  const colors = ['#0A0A0A', '#F0240E', '#0A0AE0', '#F044F0'];
  const serif = 'font-family="Liberation Serif, serif"';

  function marker(kind, x, y) {
    if (kind === 0) return `<rect x="${x - 4}" y="${y - 4}" width="8" height="8" fill="${colors[0]}"/>`;
    if (kind === 1) return `<circle cx="${x}" cy="${y}" r="4.700" fill="${colors[1]}"/>`;
    if (kind === 2) return `<path d="M${x - 5.4} ${y + 4.2}h10.800L${x} ${y - 5.2}z" fill="${colors[2]}"/>`;
    return `<path d="M${x - 5.7} ${y - 4.2}h11.400L${x} ${y + 5.2}z" fill="${colors[3]}"/>`;
  }

  function tick(x1, y1, x2, y2, w) {
    return `<line x1="${x1}" y1="${y1}" x2="${x2}" y2="${y2}" stroke="#555" stroke-width="${w}"/>`;
  }

  function drawChart(c) {
    let out = '';
    const decadeW = (c.x100 - c.left) / 3;
    const px = i => c.left + i * decadeW / 10;

    // x axis ticks, inward
    ['0.1', '1', '10', '100'].forEach((label, d) => {
      const x = c.left + d * decadeW;
      out += tick(x, c.bottom, x, c.bottom - 7, 1.2);
      out += `<text x="${x}" y="${c.xTickY}" font-size="12" fill="#444" text-anchor="middle" ${serif}>${label}</text>`;
      if (d < 3) for (let m = 2; m < 10; m++) {
        const mx = x + Math.log10(m) * decadeW;
        out += tick(mx, c.bottom, mx, c.bottom - 4, 1);
      }
    });

    // y axis ticks, inward
    if (c.decades) {
      const h = (c.bottom - c.top) / (c.decades.length - 1);
      c.decades.forEach((label, d) => {
        const y = c.top + d * h;
        out += tick(c.left, y, c.left + 7, y, 1.2);
        out += `<text x="${c.tickRight}" y="${y + 4}" font-size="12" fill="#444" text-anchor="end" ${serif}>${label}</text>`;
        if (d < c.decades.length - 1) for (let m = 2; m < 10; m++) {
          const my = y + h - Math.log10(m) * h;
          out += tick(c.left, my, c.left + 4, my, 1);
        }
      });
    } else {
      c.yTicks.forEach(([label, y]) => {
        out += tick(c.left, y, c.left + 7, y, 1.2);
        out += `<text x="${c.tickRight}" y="${y + 4}" font-size="12" fill="#444" text-anchor="end" ${serif}>${label}</text>`;
      });
      c.yMinor.forEach(y => { out += tick(c.left, y, c.left + 4, y, 1); });
    }

    // titles
    out += `<text x="${c.xTitleX}" y="${c.xTitleY}" font-size="15" fill="#333" text-anchor="middle" ${serif}><tspan font-style="italic">ω</tspan>(rad/s)</text>`;
    out += `<text transform="translate(${c.yLabelX} ${c.yLabelY}) rotate(-90)" font-size="15" fill="#333" text-anchor="middle" ${serif}><tspan font-style="italic">${c.yLabel[0]}</tspan>${c.yLabel[1]}</text>`;

    // data
    c.series.forEach((ys, s) => {
      ys.forEach((v, i) => { out += marker(s, px(i), c.originY + v / 3); });
    });

    // legend
    c.legend.ys.forEach((y, s) => {
      out += marker(s, c.legend.marker, y);
      out += `<text x="${c.legend.text}" y="${y + 4.5}" font-size="14" fill="#333" ${serif}>PTT-${s + 1}</text>`;
    });

    // frame on top of the markers
    out += `<rect x="${c.left}" y="${c.top}" width="${c.right - c.left}" height="${c.bottom - c.top}" fill="none" stroke="#555" stroke-width="1.600"/>`;
    return out;
  }

  document.getElementById('slide-svg').innerHTML = charts.map(drawChart).join('');

  // thumbnail: same data scaled down, left column cut off by the pane edge
  let thumb = '';
  charts.forEach((c, n) => {
    const fx = x => (n % 2 ? 23 + (x - c.left) * 0.115 : 15.4 - (c.right - x) * 0.115);
    const fy = y => (n < 2 ? 232 : 273) + (y - c.top) * 0.11;
    thumb += `<rect x="${fx(c.left)}" y="${fy(c.top)}" width="${(c.right - c.left) * 0.115}" height="${(c.bottom - c.top) * 0.11}" fill="none" stroke="#D0D0D0" stroke-width=".7"/>`;
    c.series.forEach((ys, s) => {
      const pts = ys.map((v, i) => fx(c.left + i * (c.x100 - c.left) / 30) + ',' + fy(c.originY + v / 3)).join(' ');
      thumb += `<polyline points="${pts}" fill="none" stroke="${colors[s]}" stroke-width=".9" opacity=".35"/>`;
    });
  });
  document.getElementById('thumb-svg').innerHTML = thumb;
</script>
</body>
</html>
